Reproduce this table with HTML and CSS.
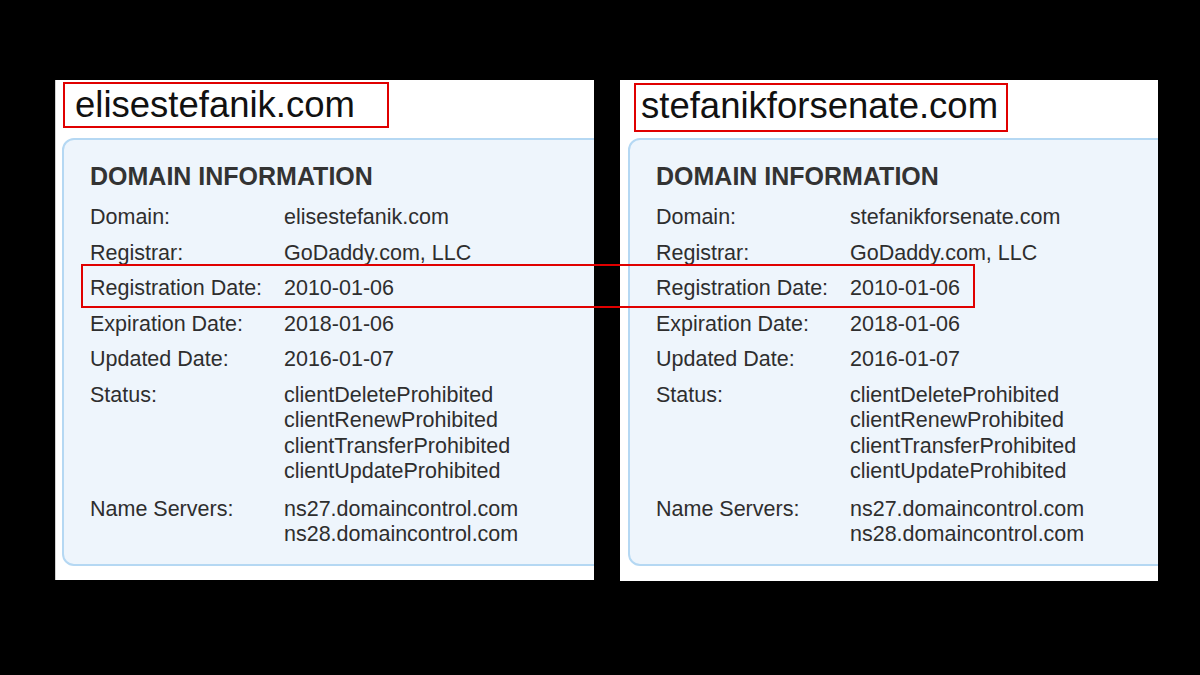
FILE: index.html
```html
<!DOCTYPE html>
<html>
<head>
<meta charset="utf-8">
<link rel="stylesheet" href="styles.css">
</head>
<body>
<div class="stage">
  <section class="panel panel-left">
    <div class="site site-left">elisestefanik.com</div>
    <div class="card">
      <h2 class="card-title">DOMAIN INFORMATION</h2>
      <dl class="info">
        <dt>Domain:</dt><dd>elisestefanik.com</dd>
        <dt>Registrar:</dt><dd>GoDaddy.com, LLC</dd>
        <dt>Registration Date:</dt><dd>2010-01-06</dd>
        <dt>Expiration Date:</dt><dd>2018-01-06</dd>
        <dt>Updated Date:</dt><dd>2016-01-07</dd>
        <dt class="status">Status:</dt><dd class="status">clientDeleteProhibited<br>clientRenewProhibited<br>clientTransferProhibited<br>clientUpdateProhibited</dd>
        <dt>Name Servers:</dt><dd>ns27.domaincontrol.com<br>ns28.domaincontrol.com</dd>
      </dl>
    </div>
  </section>
  <section class="panel panel-right">
    <div class="site site-right">stefanikforsenate.com</div>
    <div class="card card-right">
      <h2 class="card-title">DOMAIN INFORMATION</h2>
      <dl class="info">
        <dt>Domain:</dt><dd>stefanikforsenate.com</dd>
        <dt>Registrar:</dt><dd>GoDaddy.com, LLC</dd>
        <dt>Registration Date:</dt><dd>2010-01-06</dd>
        <dt>Expiration Date:</dt><dd>2018-01-06</dd>
        <dt>Updated Date:</dt><dd>2016-01-07</dd>
        <dt class="status">Status:</dt><dd class="status">clientDeleteProhibited<br>clientRenewProhibited<br>clientTransferProhibited<br>clientUpdateProhibited</dd>
        <dt>Name Servers:</dt><dd>ns27.domaincontrol.com<br>ns28.domaincontrol.com</dd>
      </dl>
    </div>
  </section>
  <div class="highlight"></div>
</div>
</body>
</html>
```
FILE: styles.css
```css
html, body {
  margin: 0;
  padding: 0;
  background: #000;
}
body {
  width: 1200px;
  height: 675px;
  overflow: hidden;
  font-family: "Liberation Sans", Arial, sans-serif;
}
.stage {
  position: relative;
  display: flex;
  gap: 26px;
  padding: 80px 0 0 55px;
  height: 675px;
  box-sizing: border-box;
}
.panel {
  background: #fff;
  height: 500px;
  overflow: hidden;
  box-sizing: border-box;
}
.panel-left {
  width: 539px;
  border-left: 1px solid #cfcfcf;
}
.panel-right {
  width: 538px;
  height: 501px;
}
.site {
  display: inline-block;
  border: 2px solid #e00000;
  font-size: 36.5px;
  line-height: 42px;
  color: #111;
  white-space: nowrap;
}
.site-left {
  margin: 2px 0 0 7px;
  padding: 0 32px 0 10px;
}
.site-right {
  margin: 3px 0 0 14px;
  padding: 0 8px 3px 5px;
}
.card {
  width: 600px;
  margin: 10px 0 0 6px;
  border: 2px solid #b5d8f3;
  border-radius: 12px;
  background: #eef5fc;
  padding: 22px 0 16px 26px;
  box-sizing: border-box;
  color: #2e2e2e;
}
.card-right {
  margin: 6px 0 0 8px;
}
.card-title {
  margin: 0 0 15px;
  font-size: 25px;
  line-height: 28px;
  font-weight: bold;
  color: #333;
}
.info {
  display: grid;
  grid-template-columns: 194px auto;
  row-gap: 10.1px;
  margin: 0;
  font-size: 21.5px;
  line-height: 25.5px;
}
.info dt, .info dd {
  margin: 0;
  white-space: nowrap;
}
.info .status {
  margin-bottom: 1.5px;
}
.highlight {
  position: absolute;
  left: 81px;
  top: 264px;
  width: 894px;
  height: 44px;
  border: 2px solid #e00000;
  box-sizing: border-box;
}
```
